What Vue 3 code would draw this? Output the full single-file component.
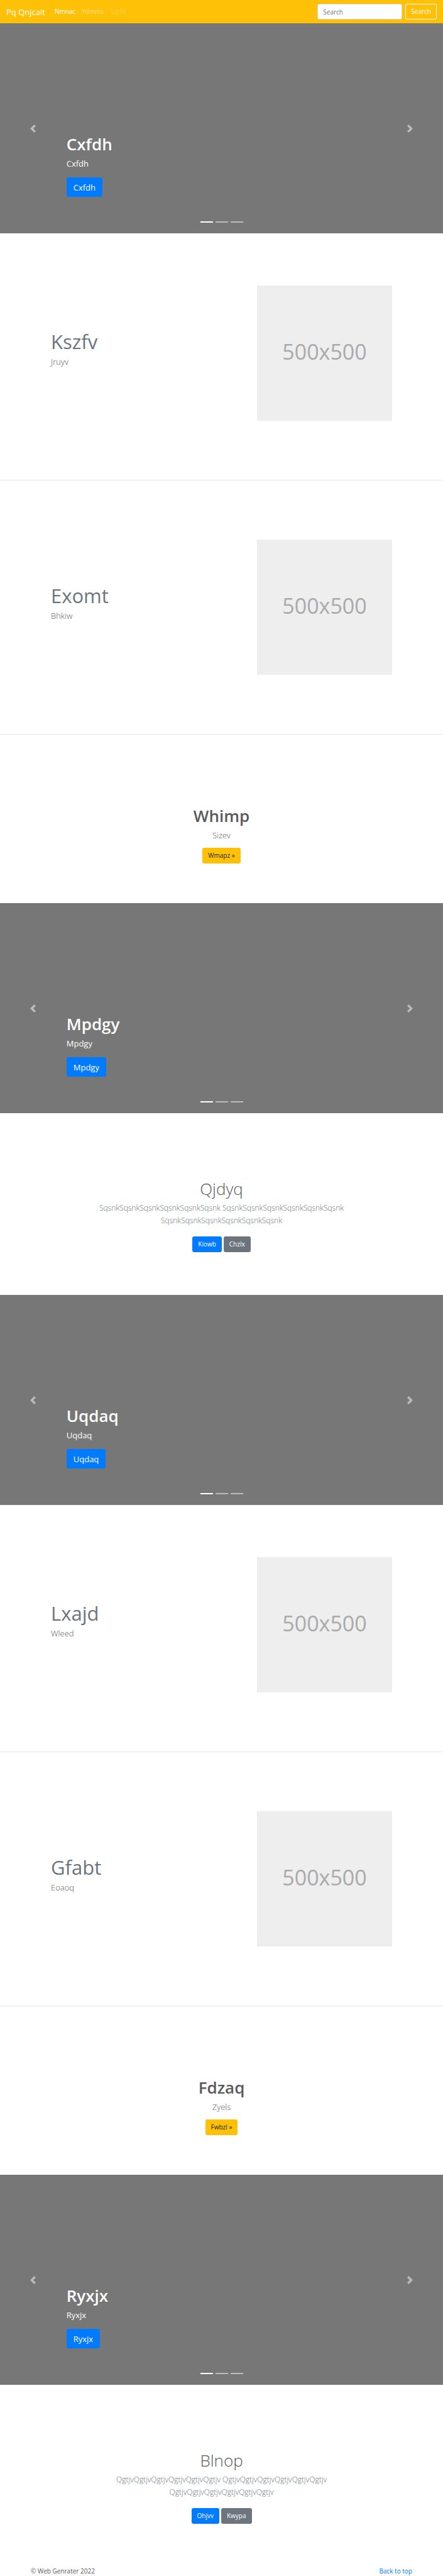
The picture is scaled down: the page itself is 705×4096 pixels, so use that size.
<script setup>
import { ref } from 'vue'

const search = ref('')

const navLinks = [
  { label: 'Nmnac', state: 'active' },
  { label: 'Ydmms', state: 'normal' },
  { label: 'Szpkc', state: 'disabled' },
]

const sections = [
  { type: 'carousel', title: 'Cxfdh' },
  { type: 'feature', title: 'Kszfv', text: 'Jruyv', first: true },
  { type: 'feature', title: 'Exomt', text: 'Bhkiw' },
  { type: 'callout', title: 'Whimp', text: 'Sizev', action: 'Wmapz »' },
  { type: 'carousel', title: 'Mpdgy' },
  {
    type: 'intro',
    title: 'Qjdyq',
    text: 'SqsnkSqsnkSqsnkSqsnkSqsnkSqsnk SqsnkSqsnkSqsnkSqsnkSqsnkSqsnk SqsnkSqsnkSqsnkSqsnkSqsnkSqsnk',
    primary: 'Kiowb',
    secondary: 'Chzlx',
  },
  { type: 'carousel', title: 'Uqdaq' },
  { type: 'feature', title: 'Lxajd', text: 'Wleed', first: true },
  { type: 'feature', title: 'Gfabt', text: 'Eoaoq' },
  { type: 'callout', title: 'Fdzaq', text: 'Zyels', action: 'Fwbzl »' },
  { type: 'carousel', title: 'Ryxjx' },
  {
    type: 'intro',
    title: 'Blnop',
    text: 'QgtjvQgtjvQgtjvQgtjvQgtjvQgtjv QgtjvQgtjvQgtjvQgtjvQgtjvQgtjv QgtjvQgtjvQgtjvQgtjvQgtjvQgtjv',
    primary: 'Ohjvv',
    secondary: 'Kwypa',
  },
]
</script>

<template>
  <div id="top" class="page">
    <header class="navbar">
      <a class="brand" href="#">Pq Qnjcait</a>
      <nav class="links">
        <a v-for="l in navLinks" :key="l.label" href="#" class="link" :class="l.state">{{ l.label }}</a>
      </nav>
      <form class="search" @submit.prevent>
        <input v-model="search" class="field" type="search" placeholder="Search" aria-label="Search" />
        <button class="btn outline" type="submit">Search</button>
      </form>
    </header>

    <main>
      <template v-for="s in sections" :key="s.title">
        <section v-if="s.type === 'carousel'" class="carousel">
          <h1 class="title strong">{{ s.title }}</h1>
          <p class="caption">{{ s.title }}</p>
          <a class="btn large primary" href="#">{{ s.title }}</a>
          <button class="control prev" type="button" aria-label="Previous">
            <svg viewBox="0 0 8 8"><path d="M5.25 0l-4 4 4 4 1.5-1.5-2.5-2.5 2.5-2.5-1.5-1.5z" /></svg>
          </button>
          <button class="control next" type="button" aria-label="Next">
            <svg viewBox="0 0 8 8"><path d="M2.75 0l-1.5 1.5 2.5 2.5-2.5 2.5 1.5 1.5 4-4-4-4z" /></svg>
          </button>
          <div class="indicators">
            <button
              v-for="n in 3"
              :key="n"
              class="dot"
              :class="{ on: n === 1 }"
              type="button"
              :aria-label="`Slide ${n}`"
            ></button>
          </div>
        </section>

        <section v-else-if="s.type === 'feature'" class="feature" :class="{ first: s.first }">
          <div class="feature-text">
            <h2 class="feature-title">{{ s.title }}</h2>
            <p class="lead">{{ s.text }}</p>
          </div>
          <div class="placeholder">500x500</div>
        </section>

        <section v-else-if="s.type === 'callout'" class="callout">
          <h2 class="title strong">{{ s.title }}</h2>
          <p class="lead">{{ s.text }}</p>
          <a class="btn warning" href="#">{{ s.action }}</a>
        </section>

        <section v-else class="intro">
          <h2 class="title light">{{ s.title }}</h2>
          <p class="lead muted">{{ s.text }}</p>
          <div class="actions">
            <a class="btn primary" href="#">{{ s.primary }}</a>
            <a class="btn secondary" href="#">{{ s.secondary }}</a>
          </div>
        </section>
      </template>
    </main>

    <footer class="footer">
      <span>© Web Genrater 2022</span>
      <a href="#top">Back to top</a>
    </footer>
  </div>
</template>

<style>
body {
  margin: 0;
  background: #fff;
}
</style>

<style scoped>
.page {
  font-family: 'Open Sans', 'Noto Sans', sans-serif;
  font-size: 10px;
  line-height: 15px;
  color: #5a5a5a;
}
.page *,
.page *::before {
  box-sizing: border-box;
}
h1,
h2,
p {
  margin: 0;
}
a {
  text-decoration: none;
}
button,
input {
  font: inherit;
  margin: 0;
}

.navbar {
  display: flex;
  align-items: center;
  height: 37px;
  padding: 0 10px;
  background: #ffc107;
}
.brand {
  margin-right: 15px;
  color: #fff;
  font-size: 13px;
  line-height: 20px;
}
.links {
  display: flex;
  flex: 1;
  gap: 10px;
}
.link {
  color: rgba(255, 255, 255, 0.5);
}
.link.active {
  color: #fff;
}
.link.disabled {
  color: rgba(255, 255, 255, 0.25);
}
.search {
  display: flex;
  gap: 5px;
}
.field {
  width: 135px;
  height: 25px;
  padding: 0 8px;
  border: 1px solid #ced4da;
  border-radius: 3px;
  background: #fff;
  color: #495057;
  appearance: none;
  outline: none;
}
.field::placeholder {
  color: #6c757d;
  opacity: 1;
}

.btn {
  display: inline-block;
  height: 25px;
  padding: 4px 8px;
  border: 1px solid transparent;
  border-radius: 3px;
  line-height: 15px;
  text-align: center;
  cursor: pointer;
}
.btn.large {
  height: 31px;
  padding: 5px 10px;
  font-size: 13px;
  line-height: 20px;
}
.btn.primary {
  background: #007bff;
  color: #fff;
}
.btn.secondary {
  background: #6c757d;
  color: #fff;
}
.btn.warning {
  background: #ffc107;
  color: #212529;
}
.btn.outline {
  border-color: #f8f9fa;
  background: transparent;
  color: #f8f9fa;
}

.title {
  margin-bottom: 5px;
  font-size: 26px;
  line-height: 31px;
}
.title.strong {
  font-weight: 600;
}
.title.light {
  font-weight: 300;
}
.lead {
  font-size: 13px;
  font-weight: 300;
  line-height: 20px;
}
.lead.muted {
  color: #6c757d;
}

.carousel {
  position: relative;
  display: flex;
  flex-direction: column;
  align-items: flex-start;
  justify-content: flex-end;
  min-height: 334px;
  padding: 0 15% 58px;
  background: #777;
  color: #fff;
}
.caption {
  margin-bottom: 12px;
  font-size: 13px;
  line-height: 20px;
}
.control {
  position: absolute;
  top: 0;
  bottom: 0;
  display: flex;
  align-items: center;
  justify-content: center;
  width: 15%;
  padding: 0;
  border: 0;
  background: none;
  opacity: 0.5;
}
.control svg {
  width: 13px;
  height: 13px;
  fill: #fff;
}
.prev {
  left: 0;
}
.next {
  right: 0;
}
.indicators {
  position: absolute;
  right: 0;
  bottom: 17px;
  left: 0;
  display: flex;
  justify-content: center;
  gap: 4px;
}
.dot {
  width: 20px;
  height: 2px;
  padding: 0;
  border: 0;
  background: #fff;
  opacity: 0.5;
}
.dot.on {
  opacity: 1;
}

.feature {
  display: flex;
  justify-content: space-between;
  padding: 94px 81px;
  border-bottom: 1px solid #e6e6e6;
}
.feature.first {
  padding-top: 83px;
}
.feature-text {
  padding-top: 73px;
}
.feature-title {
  margin-bottom: 5px;
  color: #6c757d;
  font-size: 31px;
  font-weight: 400;
  line-height: 33px;
}
.placeholder {
  display: flex;
  align-items: center;
  justify-content: center;
  width: 215px;
  height: 215px;
  padding-bottom: 5px;
  background: #eee;
  color: #aaa;
  font-size: 34px;
  line-height: 34px;
}

.callout {
  padding: 114px 20px 63px;
  text-align: center;
}
.callout .lead {
  margin-bottom: 10px;
}
.callout .btn {
  vertical-align: top;
}

.intro {
  padding: 105px 20px 68px;
  text-align: center;
}
.intro .lead {
  max-width: 440px;
  margin: 0 auto 15px;
  font-size: 12px;
}
.actions {
  display: flex;
  justify-content: center;
  gap: 3px;
}

.footer {
  display: flex;
  justify-content: space-between;
  padding: 0 49px;
}
.footer a {
  color: #007bff;
}
</style>
